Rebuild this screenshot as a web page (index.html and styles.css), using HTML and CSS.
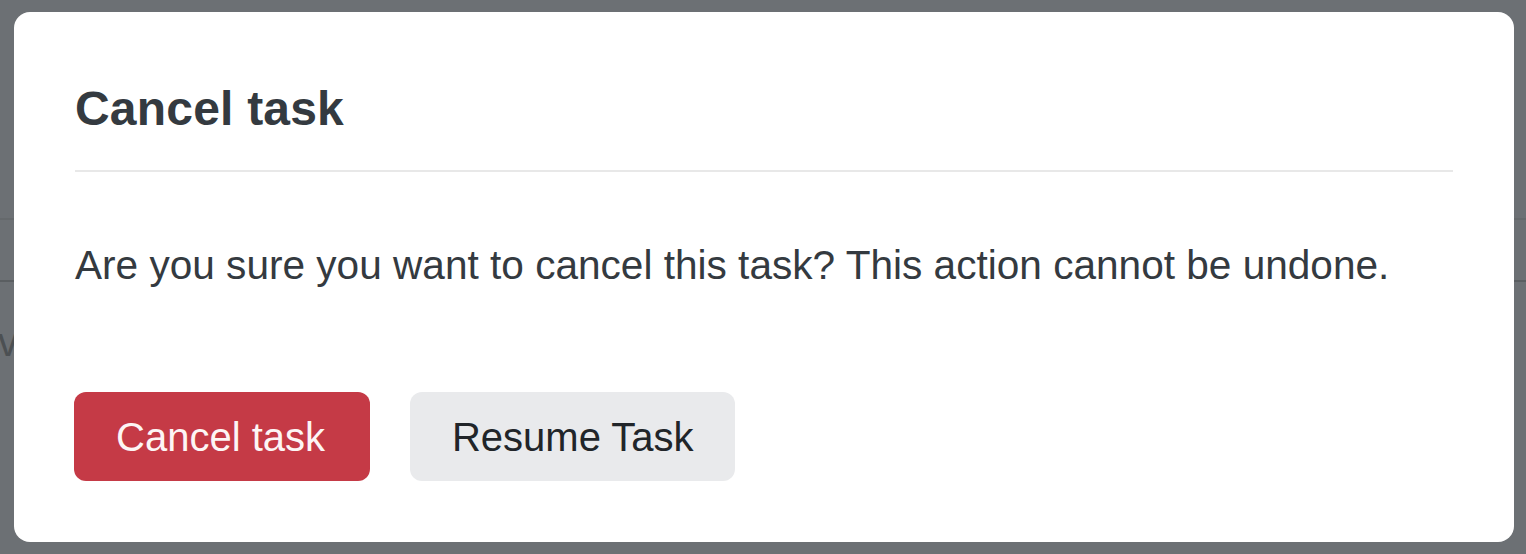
FILE: index.html
```html
<!DOCTYPE html>
<html lang="en">
<head>
<meta charset="utf-8">
<title>Cancel task</title>
<link rel="stylesheet" href="styles.css">
</head>
<body>
<div class="backdrop">
  <div class="bg-line bg-line-1"></div>
  <div class="bg-line bg-line-2"></div>
  <div class="bg-text">v</div>
</div>
<div class="modal">
  <div class="modal-header">
    <h2 class="modal-title">Cancel task</h2>
  </div>
  <div class="modal-body">
    <p class="modal-text">Are you sure you want to cancel this task? This action cannot be undone.</p>
  </div>
  <div class="modal-footer">
    <button class="btn btn-danger" type="button">Cancel task</button>
    <button class="btn btn-light" type="button">Resume Task</button>
  </div>
</div>
</body>
</html>
```
FILE: styles.css
```css
* { box-sizing: border-box; }
html, body { margin: 0; padding: 0; }
body {
  background: #6c7074;
  font-family: "Liberation Sans", Arial, sans-serif;
  width: 1526px;
  height: 554px;
  overflow: hidden;
  position: relative;
  padding: 12px 12px 12px 14px;
}
.backdrop {
  position: absolute;
  inset: 0;
  z-index: 0;
}
.bg-line {
  position: absolute;
  left: 0;
  right: 0;
  height: 2px;
}
.bg-line-1 { top: 218px; background: #65696c; }
.bg-line-2 { top: 280px; background: #5a5e61; }
.bg-text {
  position: absolute;
  left: -2px;
  top: 318px;
  font-size: 40px;
  line-height: 48px;
  color: #4c5053;
}
.modal {
  position: relative;
  z-index: 1;
  width: 1500px;
  height: 530px;
  background: #fff;
  border-radius: 16px;
  padding: 0 61px;
  display: flex;
  flex-direction: column;
}
.modal-header {
  padding-top: 68px;
  padding-bottom: 32px;
  border-bottom: 2px solid #e8e8e8;
}
.modal-title {
  margin: 0;
  font-size: 48px;
  line-height: 58px;
  font-weight: 700;
  color: #343a40;
  letter-spacing: 0.2px;
}
.modal-body {
  padding-top: 63px;
}
.modal-text {
  margin: 0;
  font-size: 40.6px;
  line-height: 60px;
  color: #343a40;
}
.modal-footer {
  margin-top: 97px;
  display: flex;
  gap: 40px;
  margin-left: -1px;
}
.btn {
  height: 89px;
  border: none;
  border-radius: 12px;
  font-family: "Liberation Sans", Arial, sans-serif;
  font-size: 40px;
  line-height: 46px;
  display: flex;
  align-items: center;
}
.btn-danger {
  padding: 0 45px 0 42px;
  background: #c53a46;
  color: #fdf5f5;
}
.btn-light {
  padding: 0 41px 0 42px;
  background: #e9eaec;
  color: #212529;
}
```
